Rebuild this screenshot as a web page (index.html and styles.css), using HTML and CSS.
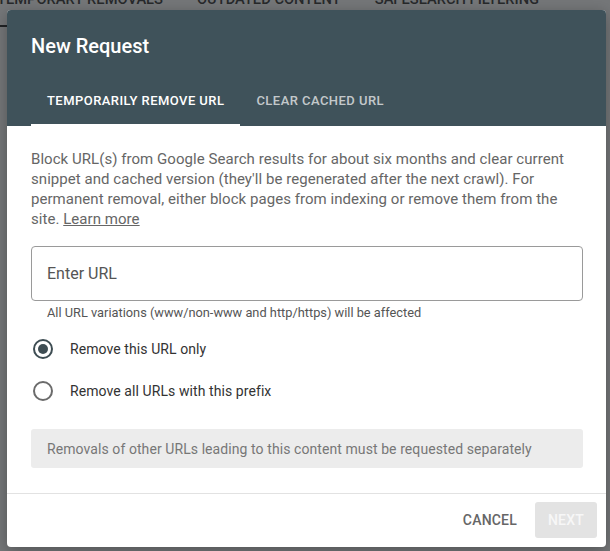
FILE: index.html
```html
<!DOCTYPE html>
<html lang="en">
<head>
<meta charset="utf-8">
<title>New Request</title>
<link rel="stylesheet" href="styles.css">
</head>
<body>
<div class="page">
  <nav class="page-tabs">
    <span class="page-tab active">TEMPORARY REMOVALS</span>
    <span class="page-tab">OUTDATED CONTENT</span>
    <span class="page-tab">SAFESEARCH FILTERING</span>
  </nav>
</div>
<div class="scrim"></div>
<div class="dialog" role="dialog" aria-labelledby="dlg-title">
  <header class="dialog-header">
    <h1 id="dlg-title" class="dialog-title">New Request</h1>
    <div class="dialog-tabs">
      <span class="dialog-tab active">TEMPORARILY REMOVE URL</span>
      <span class="dialog-tab">CLEAR CACHED URL</span>
    </div>
  </header>
  <main class="dialog-body">
    <p class="intro">Block URL(s) from Google Search results for about six months and clear current snippet and cached version (they'll be regenerated after the next crawl). For permanent removal, either block pages from indexing or remove them from the site. <a class="link" href="#">Learn more</a></p>
    <div class="url-field">
      <input class="url-input" type="text" placeholder="Enter URL">
    </div>
    <div class="helper">All URL variations (www/non-www and http/https) will be affected</div>
    <div class="radios">
      <label class="radio-row"><span class="radio checked"></span><span class="radio-label">Remove this URL only</span></label>
      <label class="radio-row"><span class="radio"></span><span class="radio-label">Remove all URLs with this prefix</span></label>
    </div>
    <div class="note">Removals of other URLs leading to this content must be requested separately</div>
  </main>
  <footer class="dialog-footer">
    <button class="btn btn-text">CANCEL</button>
    <button class="btn btn-next" disabled>NEXT</button>
  </footer>
</div>
</body>
</html>
```
FILE: styles.css
```css
* { box-sizing: border-box; }
html, body { margin: 0; padding: 0; }
body {
  width: 610px;
  height: 551px;
  overflow: hidden;
  position: relative;
  font-family: Roboto, "Noto Sans", "Liberation Sans", sans-serif;
  background: #fff;
}
.page { height: 100%; }
.page-tabs {
  display: flex;
  margin-left: -3px;
  margin-top: -13px;
  height: 40px;
  align-items: flex-start;
}
.page-tab {
  font-size: 14.7px;
  font-weight: 500;
  color: #333;
  padding: 0 17px;
  height: 40px;
  line-height: 24px;
  white-space: nowrap;
}
.page-tab.active { border-bottom: 2px solid #222; }
.page-tab:first-child { padding-left: 0; }
.scrim {
  position: absolute;
  inset: 0;
  background: rgba(33, 36, 38, 0.62);
}
.dialog {
  position: absolute;
  left: 7px;
  top: 10px;
  width: 599px;
  height: 537px;
  background: #fff;
  border-radius: 4px;
  overflow: hidden;
  display: flex;
  flex-direction: column;
  box-shadow: 0 4px 16px rgba(0,0,0,0.3);
}
.dialog-header {
  background: #3f525a;
  padding: 0 24px;
  height: 116px;
  display: flex;
  flex-direction: column;
}
.dialog-title {
  margin: 0;
  padding-top: 24px;
  height: 68px;
  font-size: 20px;
  font-weight: 500;
  line-height: 24px;
  color: #fff;
}
.dialog-tabs { display: flex; height: 48px; }
.dialog-tab {
  padding: 0 16px;
  font-size: 13px;
  font-weight: 500;
  letter-spacing: 0.45px;
  line-height: 46px;
  color: rgba(255,255,255,0.7);
  border-bottom: 2px solid transparent;
  white-space: nowrap;
}
.dialog-tab.active { color: #fff; border-bottom-color: #fff; }
.dialog-body {
  flex: 1;
  padding: 23px 23px 0 24px;
}
.intro {
  margin: 0;
  font-size: 15px;
  line-height: 20px;
  letter-spacing: 0.05px;
  color: #666;
}
.link { color: #666; text-decoration: underline; text-underline-offset: 1px; }
.url-field { margin-top: 17px; }
.url-input {
  display: block;
  width: 100%;
  height: 55px;
  border: 1px solid #9a9a9a;
  border-radius: 4px;
  padding: 0 15px;
  font-family: inherit;
  font-size: 16px;
  color: #333;
  outline: none;
}
.url-input::placeholder { color: #555; }
.helper {
  margin-top: 4px;
  padding-left: 16px;
  font-size: 12.8px;
  line-height: 16px;
  color: #555;
}
.radios { margin-top: 7px; display: flex; flex-direction: column; }
.radio-row {
  display: flex;
  align-items: center;
  height: 42px;
  gap: 15px;
  padding-left: 2px;
}
.radio {
  width: 20px;
  height: 20px;
  border-radius: 50%;
  border: 2px solid #6b6b6b;
  display: flex;
  align-items: center;
  justify-content: center;
  margin-right: 2px;
}
.radio.checked { border-color: #3e4d53; }
.radio.checked::after {
  content: "";
  width: 10px;
  height: 10px;
  border-radius: 50%;
  background: #3e4d53;
}
.radio-label { font-size: 14px; letter-spacing: 0.08px; color: #333; }
.note {
  margin-top: 17px;
  height: 39px;
  background: #ececec;
  border-radius: 3px;
  padding: 0 16px;
  display: flex;
  align-items: center;
  font-size: 14px;
  letter-spacing: 0.08px;
  color: #777;
}
.dialog-footer {
  border-top: 1px solid #e2e2e2;
  height: 54px;
  display: flex;
  justify-content: flex-end;
  align-items: flex-start;
  padding: 8px 9px 0 0;
  gap: 9px;
}
.btn {
  font-family: inherit;
  font-size: 14px;
  font-weight: 500;
  height: 36px;
  border: none;
  border-radius: 3px;
  background: transparent;
  padding: 0 8px;
  letter-spacing: 0.2px;
}
.btn-text { color: #666; margin-right: 1px; }
.btn-next {
  background: #e3e3e3;
  color: #f7f7f7;
  width: 62px;
}
```
